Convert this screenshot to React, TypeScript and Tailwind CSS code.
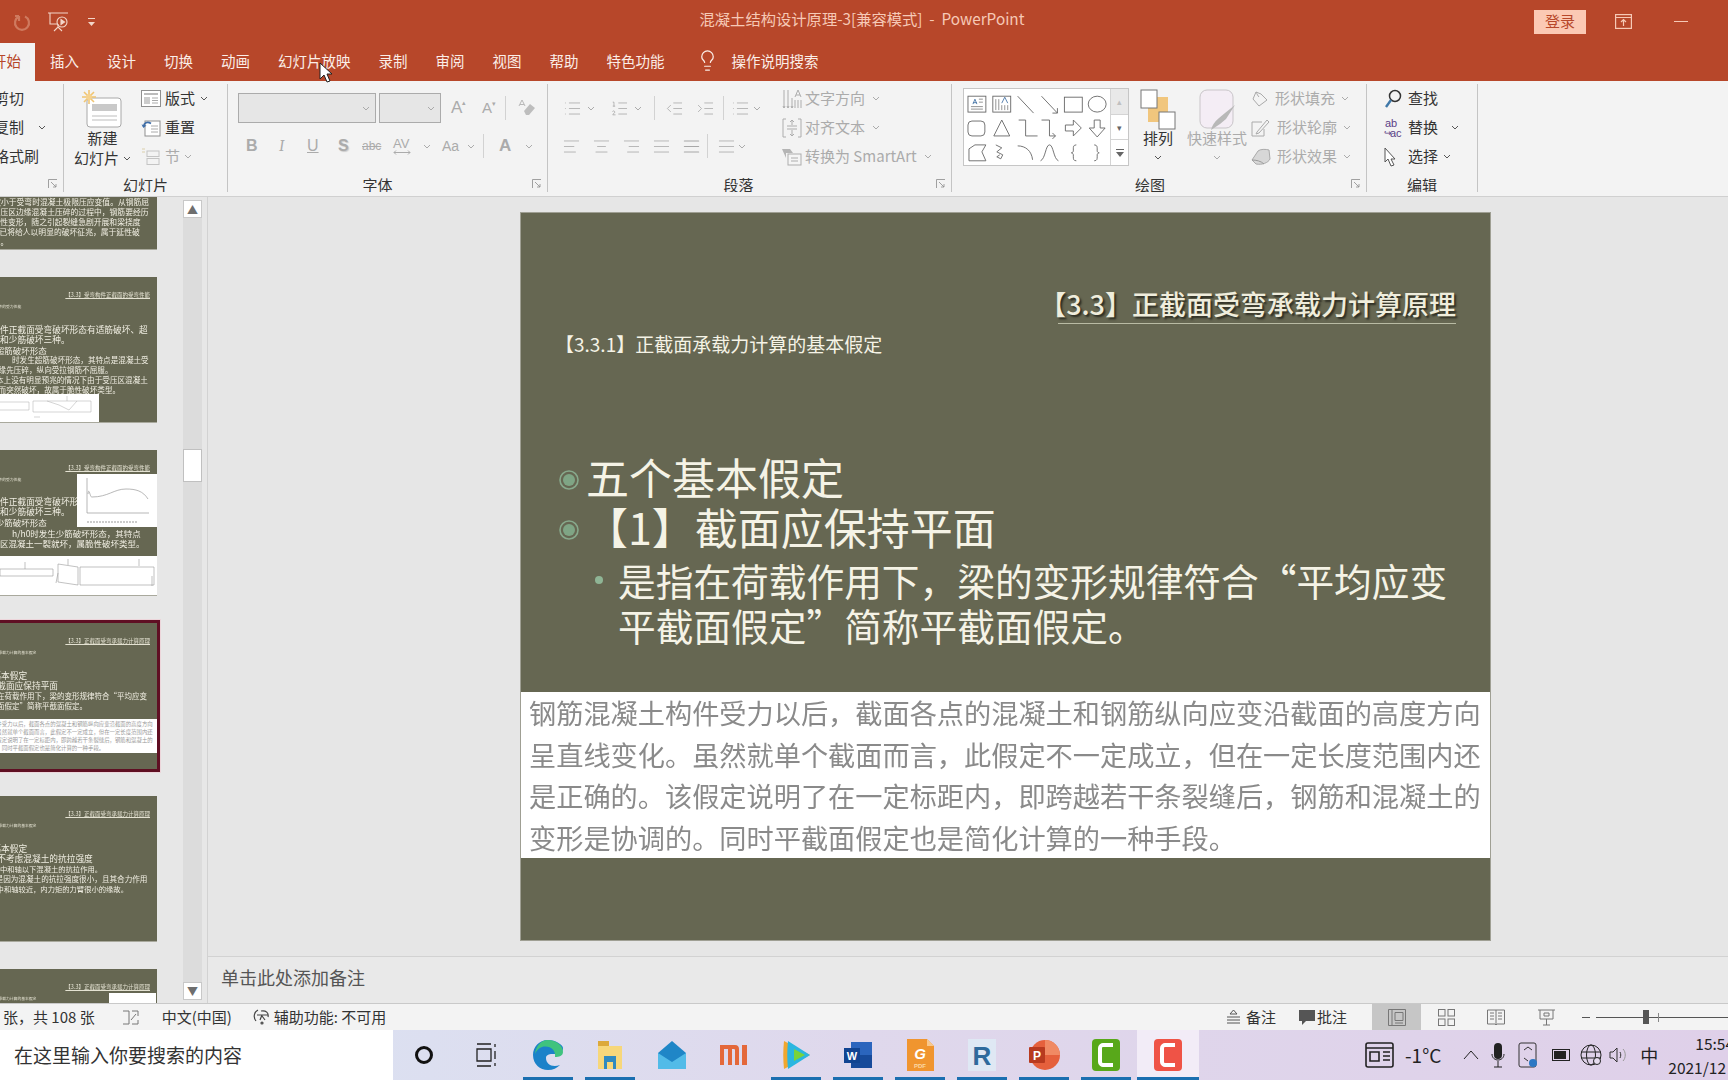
import { ReactNode } from "react";
import {
  AlignCenter,
  AlignJustify,
  AlignLeft,
  AlignRight,
  IndentDecrease,
  IndentIncrease,
  Lightbulb,
  List,
  ListOrdered,
} from "lucide-react";

const DIS = "text-[#ababab]";

function Chev({ className = "text-[#555]" }: { className?: string }) {
  return (
    <svg className={`shrink-0 ${className}`} width="8" height="5" viewBox="0 0 8 5" fill="none" stroke="currentColor" strokeWidth="1">
      <path d="M1 1l3 3 3-3" />
    </svg>
  );
}

function Launcher() {
  return (
    <svg className="absolute right-[5px] bottom-[3px]" width="10" height="10" viewBox="0 0 10 10" fill="none" stroke="#8a8a8a" strokeWidth="0.8">
      <path d="M.5 9V.5H9M3 3l5 5M8 5v3H5" />
    </svg>
  );
}

function Group({ w, label, labelPad = "", children }: { w: string; label: string; labelPad?: string; children: ReactNode }) {
  return (
    <div className={`${w} relative shrink-0 h-[108px] border-r border-[#c4c4c4] overflow-hidden flex flex-col`}>
      <div className="h-[87px] shrink-0 flex">{children}</div>
      <div className={`mt-[4px] text-center text-[15px] leading-[20px] text-[#333] ${labelPad}`}>{label}</div>
    </div>
  );
}

function Row({ className = "", children }: { className?: string; children: ReactNode }) {
  return <div className={`h-[29px] flex items-center ${className}`}>{children}</div>;
}

function MouseCursor() {
  return (
    <svg className="absolute left-[319px] top-[62px]" width="14" height="21" viewBox="0 0 14 21">
      <path d="M1 1v16l4-4 3 7 3-1-3-7h5z" fill="#fff" stroke="#222" strokeWidth="1" />
    </svg>
  );
}

function NewSlideIcon() {
  return (
    <svg width="44" height="40" viewBox="0 0 44 40" fill="none">
      <rect x="6" y="9" width="34" height="29" rx="3" fill="#fff" stroke="#a8a8a8" />
      <rect x="11" y="15" width="25" height="7" fill="#c9c9c9" />
      <path d="M11 27h25M11 31h25" stroke="#bdbdbd" />
      <path d="M8 1v14M1 8h14M3 3l10 10M13 3L3 13" stroke="#f0c572" strokeWidth="1.6" />
      <circle cx="8" cy="8" r="3" fill="#f5d28e" />
    </svg>
  );
}

function LayoutIcon() {
  return (
    <svg width="20" height="17" viewBox="0 0 20 17" fill="#fff" stroke="#8f8f8f">
      <rect x=".5" y=".5" width="19" height="16" />
      <path d="M3 4h14" stroke="#bbb" strokeWidth="2" />
      <rect x="3" y="7" width="6" height="7" fill="#ccc" stroke="none" />
      <path d="M11 8h6M11 10.5h6M11 13h6" stroke="#aaa" />
    </svg>
  );
}

function ResetIcon() {
  return (
    <svg width="20" height="18" viewBox="0 0 20 18" fill="none">
      <rect x="4" y="2" width="15" height="15" fill="#fff" stroke="#8f8f8f" />
      <path d="M10 7h7M10 10h7M10 13h7" stroke="#aaa" />
      <path d="M10 4.5C6 2 3 4 2.5 8" stroke="#3f6ea8" strokeWidth="1.8" />
      <path d="M.5 5.5l2 3.5 3-2.5z" fill="#3f6ea8" />
    </svg>
  );
}

function SectionIcon() {
  return (
    <svg width="20" height="18" viewBox="0 0 20 18" fill="none" stroke="#c4c4c4">
      <path d="M1 1h3M1 4h3" stroke="#e3dcc4" strokeWidth="1.5" />
      <rect x="6" y="3" width="12" height="5.5" />
      <rect x="6" y="10.5" width="12" height="6" />
    </svg>
  );
}

function FontGrowIcon({ up }: { up: boolean }) {
  return (
    <span className={`relative font-['Liberation_Sans',sans-serif] ${up ? "text-[17px]" : "text-[15px]"} ${DIS}`}>
      A
      <span className="absolute -right-[4px] top-[1px] text-[7px] leading-[7px]">{up ? "▴" : "▾"}</span>
    </span>
  );
}

function EraserIcon() {
  return (
    <svg width="20" height="20" viewBox="0 0 20 20" fill="none">
      <path d="M3 8l3-6 3 6M4 6.5h4" stroke="#b8b8b8" />
      <path d="M8 13l6-7 5 4-6 7h-3z" fill="#bdbdbd" />
    </svg>
  );
}

function TextDirIcon() {
  return (
    <svg width="20" height="22" viewBox="0 0 20 22" fill="none" stroke="#adadad">
      <path d="M2 2v18M6 2v18M10 10v10" />
      <path d="M1 18l1 2 1-2M5 18l1 2 1-2M9 18l1 2 1-2" />
      <path d="M13 9l3-7 3 7M14 7h4M13 12v8M16 12v8M19 12v8" />
    </svg>
  );
}

function AlignTextIcon() {
  return (
    <svg width="20" height="20" viewBox="0 0 20 20" fill="none" stroke="#adadad">
      <path d="M4 1H1v18h3M16 1h3v18h-3M5 8h10M5 11h10" />
      <path d="M10 7V2M8 4l2-2 2 2M10 12v6M8 16l2 2 2-2" />
    </svg>
  );
}

function SmartArtIcon() {
  return (
    <svg width="20" height="18" viewBox="0 0 20 18" fill="none">
      <path d="M0 1h8l3 4H4v5z" fill="#b5b5b5" />
      <rect x="6" y="6" width="13" height="11" fill="#f5f5f5" stroke="#adadad" />
      <path d="M9 10h7M9 13h7" stroke="#adadad" />
    </svg>
  );
}

function ShapeGallery() {
  return (
    <svg width="147" height="76" viewBox="0 0 147 76" fill="none" stroke="#666" strokeWidth="0.9">
      <rect x="4" y="7" width="18" height="16" />
      <path d="M11 10l-2 5M11 10l2 5M9 13.5h4" stroke="#4a76a8" />
      <path d="M7 17.5h12M7 20h12M15 10h4M15 13h4" stroke="#888" />
      <rect x="29" y="7" width="18" height="16" />
      <path d="M32 10v11M35 10v11M38 16v5M41 16v5M44 16v5" stroke="#888" />
      <path d="M38 14l3-6 3 6" stroke="#4a76a8" />
      <path d="M54 7l16 17" />
      <path d="M78 7l16 17M94 19v5h-5" />
      <rect x="101" y="8" width="18" height="15" />
      <ellipse cx="134" cy="15" rx="9" ry="8" />
      <rect x="4" y="32" width="17" height="15" rx="4" />
      <path d="M38 31l-8 16h16z" />
      <path d="M55 31h7v16h12" />
      <path d="M78 31h8v16h6M89 44l3 3-3 3" />
      <path d="M102 36h8v-5l8 8-8 8v-5h-8z" />
      <path d="M131 31h6v8h5l-8 9-8-9h5z" />
      <path d="M5 72V60l6-4h11l-4 7 4 9z" />
      <path d="M32 56l6 3-5 4 6 3-2 4-4-2 3-2" />
      <path d="M54 57c8 0 14 5 15 14" />
      <path d="M77 72c5-2 5-16 9-16s4 14 9 16" />
      <path d="M113 56c-3 0-3 2-3 4v2c0 1-1 2-2 2 1 0 2 1 2 2v2c0 2 0 4 3 4" />
      <path d="M131 56c3 0 3 2 3 4v2c0 1 1 2 2 2-1 0-2 1-2 2v2c0 2 0 4-3 4" />
    </svg>
  );
}

function ArrangeIcon() {
  return (
    <svg width="36" height="42" viewBox="0 0 36 42">
      <rect x="8" y="8" width="20" height="25" fill="#f1c67d" />
      <rect x="1" y="1" width="16" height="18" fill="#fff" stroke="#777" />
      <rect x="19" y="23" width="16" height="17" fill="#fff" stroke="#777" />
    </svg>
  );
}

function QuickStyleIcon() {
  return (
    <svg width="38" height="42" viewBox="0 0 38 42" fill="none">
      <rect x="2" y="1" width="33" height="38" rx="7" fill="#f4edf5" stroke="#c9c5c9" />
      <path d="M37 16l-9 14-6 5-9 6c1-4 3-8 8-12l6-5z" fill="#b8b8b8" />
    </svg>
  );
}

function FillIcon() {
  return (
    <svg width="18" height="18" viewBox="0 0 18 18" fill="none" stroke="#aaa">
      <path d="M5 2l-3 7 6 7 8-6-6-6z" />
      <path d="M5 2c1 2 2 4 3 5" />
    </svg>
  );
}

function OutlineIcon() {
  return (
    <svg width="20" height="18" viewBox="0 0 20 18" fill="none" stroke="#aaa">
      <path d="M11 3H1v14h12v-7" />
      <path d="M6 13l10-12 2 2L8 14l-3 1z" />
    </svg>
  );
}

function EffectIcon() {
  return (
    <svg width="20" height="18" viewBox="0 0 20 18">
      <path d="M1 12L7 3c2-2 8-2 11-1l1 9c-2 4-8 6-14 5z" fill="#d7d7d7" stroke="#aaa" />
      <path d="M1 12c4 0 9 1 12 4" fill="none" stroke="#999" />
    </svg>
  );
}

function FindIcon() {
  return (
    <svg width="18" height="20" viewBox="0 0 18 20" fill="none">
      <circle cx="11" cy="7" r="5.5" stroke="#333" strokeWidth="1.5" />
      <path d="M7 11l-5 7" stroke="#3f78a8" strokeWidth="2.4" />
    </svg>
  );
}

function ReplaceIcon() {
  return (
    <span className="relative w-[20px] h-[22px] font-['Liberation_Sans',sans-serif] text-[11px] leading-[10px] text-[#5b3f86] block">
      <span className="block pl-[1px] pt-[1px]">ab</span>
      <span className="block pl-[6px]">ac</span>
      <span className="absolute left-0 top-[11px] text-[9px] leading-[10px]">↪</span>
    </span>
  );
}

function SelectArrow() {
  return (
    <svg width="12" height="20" viewBox="0 0 12 20" fill="#fff" stroke="#555">
      <path d="M1 1v14l3-3 3 7 3-1-3-6h4z" />
    </svg>
  );
}

function Ribbon() {
  return (
    <div className="h-[116px] bg-[#f3f3f3] border-b border-[#d0d0d0] flex pt-[3px] text-[15px] text-[#333]">
      <Group w="w-[64px]" label="">
        <div className="-ml-[6px] flex flex-col whitespace-nowrap">
          <Row>剪切</Row>
          <Row className="gap-[14px]">
            复制
            <Chev />
          </Row>
          <Row>格式刷</Row>
        </div>
        <Launcher />
      </Group>
      <Group w="w-[164px]" label="幻灯片">
        <div className="w-[77px] flex flex-col items-center">
          <div className="pt-[5px]">
            <NewSlideIcon />
          </div>
          <div className="leading-[20px] text-center -mt-[1px]">新建</div>
          <div className="leading-[20px] flex items-center gap-[4px] whitespace-nowrap">
            幻灯片
            <Chev />
          </div>
        </div>
        <div className="flex flex-col">
          <Row className="gap-[4px]">
            <LayoutIcon />
            版式
            <span className="ml-[1px]">
              <Chev />
            </span>
          </Row>
          <Row className="gap-[4px]">
            <ResetIcon />
            重置
          </Row>
          <Row className={`gap-[4px] ${DIS}`}>
            <SectionIcon />
            节
            <Chev className={DIS} />
          </Row>
        </div>
      </Group>
      <Group w="w-[320px]" label="字体" labelPad="pr-[20px]">
        <div className="pl-[10px] flex flex-col">
          <div className="h-[44px] pt-[9px] flex gap-[3px]">
            <div className="w-[138px] h-[30px] bg-[#e6e6e6] border border-[#ababab] flex items-center justify-end pr-[5px]">
              <Chev className="text-[#aaa]" />
            </div>
            <div className="w-[62px] h-[30px] bg-[#e6e6e6] border border-[#ababab] flex items-center justify-end pr-[5px]">
              <Chev className="text-[#aaa]" />
            </div>
            <div className="flex items-center h-[30px]">
              <div className="w-[30px] pl-[7px]">
                <FontGrowIcon up />
              </div>
              <div className="w-[28px] pl-[8px]">
                <FontGrowIcon up={false} />
              </div>
              <div className="w-px h-[24px] bg-[#d2d2d2] ml-[3px]" />
              <div className="pl-[10px]">
                <EraserIcon />
              </div>
            </div>
          </div>
          <div className={`flex items-center h-[30px] mt-[3px] pl-[8px] font-['Liberation_Sans',sans-serif] ${DIS}`}>
            <span className="w-[33px] font-bold text-[16px]">B</span>
            <span className="w-[28px] italic font-serif text-[16px]">I</span>
            <span className="w-[31px] underline text-[16px]">U</span>
            <span className="w-[24px] font-bold text-[16px] [text-shadow:1px_1px_1px_#ccc]">S</span>
            <span className="w-[31px] text-[12px] line-through">abc</span>
            <span className="w-[30px] flex flex-col items-start text-[13px] leading-[13px]">
              AV
              <svg width="18" height="5" viewBox="0 0 18 5" fill="none" stroke="#ababab">
                <path d="M1 2.5h16M3 .5l-2 2 2 2M15 .5l2 2-2 2" />
              </svg>
            </span>
            <span className="w-[19px]">
              <Chev className={DIS} />
            </span>
            <span className="w-[25px] text-[14px]">Aa</span>
            <span className="w-[16px]">
              <Chev className={DIS} />
            </span>
            <div className="w-px h-[24px] bg-[#d2d2d2] mr-[15px]" />
            <span className="w-[26px] text-[17px] font-bold">A</span>
            <Chev className={DIS} />
          </div>
        </div>
        <Launcher />
      </Group>
      <Group w="w-[404px]" label="段落" labelPad="pr-[22px]">
        <div className="pl-[15px] w-[226px] flex flex-col text-[#a8a8a8]">
          <div className="h-[44px] pt-[4px] flex items-center">
            <List size={19} strokeWidth={1} />
            <span className="ml-[5px] w-[23px]">
              <Chev className={DIS} />
            </span>
            <ListOrdered size={19} strokeWidth={1} />
            <span className="ml-[5px] w-[20px]">
              <Chev className={DIS} />
            </span>
            <div className="w-px h-[24px] bg-[#d2d2d2] mr-[10px]" />
            <IndentDecrease size={19} strokeWidth={1} className="mr-[12px]" />
            <IndentIncrease size={19} strokeWidth={1} className="mr-[8px]" />
            <div className="w-px h-[24px] bg-[#d2d2d2] mr-[7px]" />
            <List size={19} strokeWidth={1} />
            <span className="ml-[3px]">
              <Chev className={DIS} />
            </span>
          </div>
          <div className="h-[30px] mt-[3px] flex items-center gap-[11px] -ml-[1px]">
            <AlignLeft size={19} strokeWidth={1} />
            <AlignCenter size={19} strokeWidth={1} />
            <AlignRight size={19} strokeWidth={1} />
            <AlignJustify size={19} strokeWidth={1} />
            <AlignJustify size={19} strokeWidth={1.4} />
            <div className="w-px h-[24px] bg-[#d2d2d2] -ml-[5px]" />
            <AlignJustify size={19} strokeWidth={1} className="-ml-[2px]" />
            <span className="-ml-[9px]">
              <Chev className={DIS} />
            </span>
          </div>
        </div>
        <div className={`flex flex-col pl-[8px] ${DIS}`}>
          <Row className="gap-[3px]">
            <TextDirIcon />
            文字方向
            <span className="ml-[4px]">
              <Chev className={DIS} />
            </span>
          </Row>
          <Row className="gap-[3px]">
            <AlignTextIcon />
            对齐文本
            <span className="ml-[4px]">
              <Chev className={DIS} />
            </span>
          </Row>
          <Row className="gap-[3px] whitespace-nowrap">
            <SmartArtIcon />
            转换为 SmartArt
            <span className="ml-[4px]">
              <Chev className={DIS} />
            </span>
          </Row>
        </div>
        <Launcher />
      </Group>
      <Group w="w-[415px]" label="绘图" labelPad="pr-[18px]">
        <div className="ml-[11px] mt-[4px] w-[166px] h-[78px] bg-white border border-[#c6c6c6] flex shrink-0">
          <ShapeGallery />
          <div className="w-[18px] flex flex-col text-[9px] leading-none text-[#666] border-l border-[#d4d4d4]">
            <div className="flex-1 bg-[#e9e9e9] flex items-center justify-center text-[#c0c0c0]">▴</div>
            <div className="flex-1 border-y border-[#d4d4d4] flex items-center justify-center">▾</div>
            <div className="flex-1 flex items-center justify-center">
              <svg width="8" height="8" viewBox="0 0 8 8" fill="#666">
                <path d="M0 0h8v1H0zM0 3h8L4 8z" />
              </svg>
            </div>
          </div>
        </div>
        <div className="w-[54px] ml-[2px] pt-[5px] flex flex-col items-center shrink-0">
          <ArrangeIcon />
          <div className="leading-[20px] -mt-[3px]">排列</div>
          <div className="mt-[7px]">
            <Chev />
          </div>
        </div>
        <div className={`w-[64px] pt-[5px] flex flex-col items-center shrink-0 ${DIS}`}>
          <QuickStyleIcon />
          <div className="leading-[20px] -mt-[3px] whitespace-nowrap">快速样式</div>
          <div className="mt-[7px]">
            <Chev className={DIS} />
          </div>
        </div>
        <div className={`flex flex-col pl-[2px] ${DIS}`}>
          <Row className="gap-[6px]">
            <FillIcon />
            形状填充
            <Chev className={DIS} />
          </Row>
          <Row className="gap-[6px]">
            <OutlineIcon />
            形状轮廓
            <Chev className={DIS} />
          </Row>
          <Row className="gap-[6px]">
            <EffectIcon />
            形状效果
            <Chev className={DIS} />
          </Row>
        </div>
        <Launcher />
      </Group>
      <Group w="w-[111px]" label="编辑">
        <div className="pl-[17px] flex flex-col">
          <Row className="gap-[6px]">
            <FindIcon />
            查找
          </Row>
          <Row className="gap-[4px]">
            <ReplaceIcon />
            替换
            <span className="ml-[9px]">
              <Chev />
            </span>
          </Row>
          <Row className="gap-[12px]">
            <SelectArrow />
            <span>选择</span>
            <span className="-ml-[7px]">
              <Chev />
            </span>
          </Row>
        </div>
      </Group>
    </div>
  );
}

function TitleBar() {
  return (
    <div className="h-[43px] bg-[#b7472a] relative flex items-center text-[#f6c9b6]">
      <svg className="ml-[13px]" width="18" height="18" viewBox="0 0 18 18" fill="none" stroke="#cf7a5f" strokeWidth="2.2">
        <path d="M6 3.5a7 7 0 1 0 6 0M6 3v5M6 3H2" />
      </svg>
      <svg className="ml-[16px]" width="22" height="22" viewBox="0 0 22 22" fill="none" stroke="#f3d6c9" strokeWidth="1.1">
        <path d="M1 2h20M3 2v11h8M11 13v3M7 20l4-4 4 4" />
        <circle cx="15" cy="11" r="5" />
        <path d="M14 8.5v5l3.5-2.5z" fill="#f3d6c9" />
      </svg>
      <svg className="ml-[19px]" width="7" height="10" viewBox="0 0 7 10" fill="#f3d6c9">
        <path d="M0 1h7v1H0zM0 5h7L3.5 9z" />
      </svg>
      <div className="absolute left-0 right-0 top-[8px] flex justify-center text-[15.3px] leading-[20px] whitespace-pre pr-[4px]">
        混凝土结构设计原理-3[兼容模式]  -  PowerPoint
      </div>
      <div className="ml-auto flex items-center">
        <div className="w-[52px] h-[24px] bg-[#fbc9b4] text-[#b7472a] text-[15px] flex items-center justify-center">登录</div>
        <svg className="ml-[29px]" width="17" height="15" viewBox="0 0 17 15" fill="none" stroke="#f6c9b6" strokeWidth="1.2">
          <rect x=".6" y=".6" width="15.8" height="13.8" />
          <path d="M1 3.5h15M8.5 12V6M6 8l2.5-2.5L11 8" />
        </svg>
        <div className="w-[14px] h-[1.5px] bg-[#f6c9b6] ml-[42px] mr-[40px]" />
      </div>
    </div>
  );
}

const TABS = ["插入", "设计", "切换", "动画", "幻灯片放映", "录制", "审阅", "视图", "帮助", "特色功能"];

function TabBar() {
  return (
    <div className="h-[38px] bg-[#b7472a] flex items-center text-[14.5px] text-[#fbeee8] relative whitespace-nowrap">
      <div className="w-[35px] h-full bg-[#f3f3f3] text-[#b7472a] flex items-center justify-end pr-[14px] pb-[3px] shrink-0">开始</div>
      <div className="ml-[15px] -mt-[3px] flex gap-[28px]">
        {TABS.map((t) => (
          <span key={t}>{t}</span>
        ))}
      </div>
      <Lightbulb className="ml-[31px] -mt-[3px]" size={23} strokeWidth={1.3} />
      <span className="ml-[13px] -mt-[3px]">操作说明搜索</span>
    </div>
  );
}

function Line({ pl, size, children }: { pl: string; size: string; children: ReactNode }) {
  return <div className={`${pl} ${size} leading-[10px] whitespace-nowrap text-[#f0eee2]`}>{children}</div>;
}

function Thumb({ title, sub, selected, children }: { title: string; sub: string; selected?: boolean; children: ReactNode }) {
  return (
    <div
      className={`w-[195px] h-[146px] shrink-0 bg-[#666752] relative overflow-hidden blur-[0.3px] ${
        selected ? "outline-[3px] outline-[#5f0f23] shadow-[0_0_0_4px_#ecd5da]" : "border-b border-[#a9a99d]"
      }`}
    >
      <div className="h-[20px] pt-[15px] pr-[7px] text-right text-[5.5px] leading-[6px] text-[#e4e2d2] underline whitespace-nowrap">{title}</div>
      <div className="pl-[9px] mt-[-1px] pt-[8px] text-[3.8px] leading-[6px] text-[#e4e2d2] whitespace-nowrap">{sub}</div>
      {children}
    </div>
  );
}

function ThumbPane() {
  return (
    <div className="w-[208px] shrink-0 flex bg-[#e7e7e7] border-r border-[#d2d2d2]">
      <div className="w-[165px] pr-[8px] flex flex-col items-end gap-[27px] overflow-hidden">
        <div className="w-[195px] h-[146px] shrink-0 -mt-[93px] bg-[#666752] border-b border-[#a9a99d] relative overflow-hidden flex flex-col justify-end pb-[2px] blur-[0.3px]">
          <Line pl="pl-0" size="text-[7.8px]">受压区高度小于受弯时混凝土极限压应变值。从钢筋屈</Line>
          <Line pl="pl-[15px]" size="text-[7.8px]">服至受压区边缘混凝土压碎的过程中，钢筋要经历</Line>
          <Line pl="pl-[7px]" size="text-[7.8px]">较大的塑性变形，随之引起裂缝急剧开展和梁挠度</Line>
          <Line pl="pl-[14px]" size="text-[7.8px]">激增，已将给人以明显的破坏征兆，属于延性破</Line>
          <Line pl="pl-[15px]" size="text-[7.8px]">坏类型。</Line>
        </div>
        <Thumb title="【3.3】受弯构件正截面的受弯性能" sub="【3.3.1】受弯构件的受力性能">
          <div className="pt-[15px]">
            <Line pl="pl-[12px]" size="text-[8.7px]">受弯构件正截面受弯破坏形态有适筋破坏、超</Line>
            <Line pl="pl-[12px]" size="text-[8.7px]">筋破坏和少筋破坏三种。</Line>
            <Line pl="pl-[12px]" size="text-[8.5px]">（2）超筋破坏形态</Line>
            <Line pl="pl-[50px]" size="text-[7.6px]">时发生超筋破坏形态，其特点是混凝土受</Line>
            <Line pl="pl-[29px]" size="text-[7.6px]">边缘先压碎，纵向受拉钢筋不屈服。</Line>
            <Line pl="pl-[34px]" size="text-[7.6px]">本上没有明显预兆的情况下由于受压区混凝土</Line>
            <Line pl="pl-[29px]" size="text-[7.6px]">碎而突然破坏，故属于脆性破坏类型。</Line>
          </div>
          <svg className="absolute left-0 bottom-0" width="137" height="28" viewBox="0 0 137 28" fill="none" stroke="#aaa" strokeWidth="0.5">
            <rect width="137" height="28" fill="#fff" stroke="none" />
            <path d="M0 8h67v8H0zM71 7h58v11H71zM85 7l12 4 10 5 8-9M105 2v5M72 23h6" />
          </svg>
        </Thumb>
        <Thumb title="【3.3】受弯构件正截面的受弯性能" sub="【3.3.1】受弯构件的受力性能">
          <div className="pt-[14px]">
            <Line pl="pl-[12px]" size="text-[8.7px]">受弯构件正截面受弯破坏形</Line>
            <Line pl="pl-[12px]" size="text-[8.7px]">筋破坏和少筋破坏三种。</Line>
            <Line pl="pl-[12px]" size="text-[8.5px]">（3）少筋破坏形态</Line>
            <div className="pl-[50px] mt-[1px] text-[8.5px] leading-[10px] text-[#f0eee2] whitespace-nowrap">h/h0时发生少筋破坏形态，其特点</div>
            <div className="pl-[21px] text-[8.5px] leading-[10px] text-[#f0eee2] whitespace-nowrap">受拉区混凝土一裂就坏，属脆性破坏类型。</div>
          </div>
          <div className="absolute right-0 top-[24px] w-[80px] h-[53px] bg-white">
            <svg width="80" height="53" viewBox="0 0 80 53" fill="none" stroke="#999" strokeWidth="0.7">
              <path d="M10 4v35h62M11 20c1-8 2 4 4 3 16 0 22-8 34-8 10 0 17 2 22 10" />
              <path d="M10 48h50" strokeDasharray="2 1" stroke="#ccc" strokeWidth="2" />
            </svg>
          </div>
          <div className="absolute left-0 right-0 bottom-0 h-[39px] bg-white">
            <svg width="195" height="39" viewBox="0 0 195 39" fill="none" stroke="#999" strokeWidth="0.6">
              <path d="M38 13h53v7H38zM96 8l20 3v18l-20-3zM118 11h74v18h-74zM63 6v7M106 3v6M177 3v7M96 17l-2 10M190 20v10" />
            </svg>
          </div>
        </Thumb>
        <Thumb title="【3.3】正截面受弯承载力计算原理" sub="【3.3.1】正截面承载力计算的基本假定" selected>
          <div className="pt-[15px]">
            <Line pl="pl-[13px]" size="text-[8.7px]">五个基本假定</Line>
            <Line pl="pl-[13px]" size="text-[8.7px]">【1】截面应保持平面</Line>
            <Line pl="pl-[20px]" size="text-[7.5px]">是指在荷载作用下，梁的变形规律符合“平均应变</Line>
            <Line pl="pl-[20px]" size="text-[7.5px]">平截面假定”简称平截面假定。</Line>
          </div>
          <div className="absolute left-0 right-0 top-[96px] h-[34px] bg-white text-[5.4px] leading-[8px] text-[#999] pl-[2px] pt-[1px] whitespace-nowrap">
            <div>钢筋混凝土构件受力以后，截面各点的混凝土和钢筋纵向应变沿截面的高度方向</div>
            <div>呈直线变化。虽然就单个截面而言，此假定不一定成立，但在一定长度范围内还</div>
            <div>是正确的。该假定说明了在一定标距内，即跨越若干条裂缝后，钢筋和混凝土的</div>
            <div>变形是协调的。同时平截面假定也是简化计算的一种手段。</div>
          </div>
        </Thumb>
        <Thumb title="【3.3】正截面受弯承载力计算原理" sub="【3.3.1】正截面承载力计算的基本假定">
          <div className="pt-[15px]">
            <Line pl="pl-[13px]" size="text-[8.7px]">五个基本假定</Line>
            <Line pl="pl-[13px]" size="text-[8.7px]">【2】不考虑混凝土的抗拉强度</Line>
            <Line pl="pl-[16px]" size="text-[7.3px]">不考虑中和轴以下混凝土的抗拉作用。</Line>
            <Line pl="pl-[26px]" size="text-[7.6px]">这是因为混凝土的抗拉强度很小，且其合力作用</Line>
            <Line pl="pl-[20px]" size="text-[7.3px]">点离中和轴较近，内力矩的力臂很小的缘故。</Line>
          </div>
        </Thumb>
        <Thumb title="【3.3】正截面受弯承载力计算原理" sub="【3.3.1】正截面承载力计算的基本假定">
          <div className="absolute right-[1px] top-[24px] w-[47px] h-[40px] bg-white" />
        </Thumb>
      </div>
      <div className="ml-[18px] mt-[3px] mb-[3px] w-[19px] bg-[#dcdcdc] flex flex-col text-[#6e6e6e] text-[11px] leading-none">
        <div className="h-[18px] bg-white border border-[#c8c8c8] flex items-center justify-center">▲</div>
        <div className="mt-[231px] h-[33px] bg-white border border-[#c0c0c0]" />
        <div className="mt-auto h-[18px] bg-white border border-[#c8c8c8] flex items-center justify-center">▼</div>
      </div>
    </div>
  );
}

function Bullet() {
  return (
    <svg className="shrink-0 mt-[8px]" width="20" height="20" viewBox="0 0 20 20" fill="none">
      <circle cx="10" cy="10" r="9" stroke="#87a98c" strokeWidth="1.6" />
      <circle cx="10" cy="10" r="6" fill="#7fa585" />
    </svg>
  );
}

function Slide() {
  return (
    <div className="w-[971px] h-[729px] bg-[#666752] border border-[#9f9f93] flex flex-col text-[#f5f3e6] shrink-0">
      <div className="pt-[72px] pr-[34px] flex flex-col items-end">
        <div className="text-[27px] leading-[38px] font-medium text-[#efeddc] whitespace-nowrap [text-shadow:2px_2px_2px_#2c2c22]">
          【3.3】正截面受弯承载力计算原理
        </div>
        <div className="w-[398px] h-px bg-[#b9bba4]" />
      </div>
      <div className="pl-[34px] mt-[6px] text-[19px] leading-[28px] whitespace-nowrap">【3.3.1】正截面承载力计算的基本假定</div>
      <div className="pl-[38px] mt-[92px] flex items-center gap-[7px] text-[43px] leading-[52px]">
        <Bullet />
        <span>五个基本假定</span>
      </div>
      <div className="pl-[38px] -mt-[2px] flex items-center gap-[6px] text-[43px] leading-[52px]">
        <Bullet />
        <span className="whitespace-nowrap">【1】截面应保持平面</span>
      </div>
      <div className="pl-[74px] mt-[5px] flex items-start gap-[15px] text-[37.7px] leading-[45px]">
        <span className="w-[8px] h-[8px] rounded-full bg-[#8fb595] mt-[19px] shrink-0" />
        <div className="whitespace-nowrap">
          <div>是指在荷载作用下，梁的变形规律符合“平均应变</div>
          <div>平截面假定”简称平截面假定。</div>
        </div>
      </div>
      <div className="mt-[45px] h-[166px] bg-white text-[#8a8a8a] text-[27.2px] leading-[41.5px] pl-[8px] whitespace-nowrap blur-[0.4px]">
        <div>钢筋混凝土构件受力以后，截面各点的混凝土和钢筋纵向应变沿截面的高度方向</div>
        <div>呈直线变化。虽然就单个截面而言，此假定不一定成立，但在一定长度范围内还</div>
        <div>是正确的。该假定说明了在一定标距内，即跨越若干条裂缝后，钢筋和混凝土的</div>
        <div>变形是协调的。同时平截面假定也是简化计算的一种手段。</div>
      </div>
    </div>
  );
}

function StatusBar() {
  return (
    <div className="h-[27px] bg-[#f3f3f3] border-t border-[#c9c9c9] flex items-center text-[15px] text-[#333] whitespace-nowrap">
      <span className="ml-[3px]">张，共 108 张</span>
      <svg className="ml-[27px]" width="17" height="15" viewBox="0 0 17 15" fill="none" stroke="#777">
        <path d="M1 1h6v13H1M10 1h6v5M10 14h6V10M9 10l5-6" />
      </svg>
      <span className="ml-[23px]">中文(中国)</span>
      <svg className="ml-[20px]" width="18" height="18" viewBox="0 0 18 18" fill="none" stroke="#444" strokeWidth="1.2">
        <path d="M6 2C2 4 1 9 4 13M9 3c5-1 8 2 7 6M5 7h11M10 7l-2 5M10 8l3 4" />
        <circle cx="10" cy="15" r="1" />
      </svg>
      <span className="ml-[4px]">辅助功能: 不可用</span>
      <svg className="ml-auto" width="13" height="16" viewBox="0 0 13 16" fill="none" stroke="#555">
        <path d="M6.5 1L3 5h7zM0 8h13M0 11h13M0 14h13" />
      </svg>
      <span className="ml-[6px]">备注</span>
      <svg className="ml-[22px]" width="18" height="18" viewBox="0 0 18 18" fill="#555">
        <path d="M1 2h16v11H8l-4 4v-4H1z" />
      </svg>
      <span className="ml-[1px]">批注</span>
      <div className="ml-[25px] w-[49px] h-full bg-[#c6c6c6] flex items-center justify-center">
        <svg width="18" height="17" viewBox="0 0 18 17" fill="none" stroke="#777">
          <path d="M.5.5h17v16H.5zM4 .5v16M7 3.5h8v8H7zM7 14h8" />
        </svg>
      </div>
      <div className="w-[50px] flex justify-center">
        <svg width="17" height="17" viewBox="0 0 17 17" fill="none" stroke="#777">
          <rect x=".5" y=".5" width="6.5" height="6.5" />
          <rect x="10" y=".5" width="6.5" height="6.5" />
          <rect x=".5" y="10" width="6.5" height="6.5" />
          <rect x="10" y="10" width="6.5" height="6.5" />
        </svg>
      </div>
      <div className="w-[50px] flex justify-center">
        <svg width="18" height="17" viewBox="0 0 18 17" fill="none" stroke="#777">
          <path d="M.5 1h17v14H10l-1 1-1-1H.5zM9 1v14M3 4h4M3 7h4M3 10h4M11 4h4M11 7h4M11 10h4" />
        </svg>
      </div>
      <div className="w-[50px] flex justify-center">
        <svg width="17" height="17" viewBox="0 0 17 17" fill="none" stroke="#777">
          <path d="M0 1h17M2 1v9h13V1M8.5 10v6M5 16h7M6 4h5v3H6z" />
        </svg>
      </div>
      <div className="ml-[11px] w-[8px] h-px bg-[#555]" />
      <div className="ml-[6px] w-[132px] h-px bg-[#555] relative">
        <div className="absolute left-[47px] -top-[7px] w-[6px] h-[14px] bg-[#555]" />
        <div className="absolute left-[62px] -top-[4px] w-px h-[9px] bg-[#888]" />
      </div>
    </div>
  );
}

function Edge() {
  return (
    <svg width="32" height="32" viewBox="0 0 32 32">
      <path d="M16 1C7 1 1 8 1 16c0 9 7 15 15 15 5 0 9-2 12-5-8 3-14-1-14-7 0-3 3-4 6-4 7 0 11-1 11-6C31 6 24 1 16 1z" fill="#1b82c9" />
      <path d="M16 1c8 0 15 5 15 12 0 4-4 5-8 5 1-7-5-12-13-10-3 1-6 4-7 7C4 7 9 1 16 1z" fill="#3fc37e" />
    </svg>
  );
}

function Folder() {
  return (
    <svg width="28" height="30" viewBox="0 0 28 30">
      <path d="M2 1h11v5H2z" fill="#dca93b" />
      <path d="M2 6h24v23H2z" fill="#f7d77a" />
      <path d="M8 16h12v13h-3v-7h-6v7H8z" fill="#2f8ac0" />
    </svg>
  );
}

function Mail() {
  return (
    <svg width="30" height="32" viewBox="0 0 30 32">
      <path d="M15 2l14 12v16H1V14z" fill="#1f86c7" />
      <path d="M1 14l14 9 14-9v16H1z" fill="#52bbe8" />
    </svg>
  );
}

function Mi() {
  return (
    <svg width="30" height="24" viewBox="0 0 30 24" fill="#e4683a">
      <path d="M1 2h15c3 0 4 2 4 4v16h-4V7c0-1-1-1-1-1h-2v16H9V6H5v16H1zM23 2h5v20h-5z" />
    </svg>
  );
}

function Play() {
  return (
    <svg width="30" height="32" viewBox="0 0 30 32">
      <path d="M3 2c-1 9-1 19 0 28l26-14z" fill="#f0a72e" />
      <path d="M7 2c-1 9-1 19 0 28l22-14z" fill="#2bb6e0" />
      <path d="M13 10v12l11-6z" fill="#7ad33b" />
    </svg>
  );
}

function Word() {
  return (
    <svg width="30" height="30" viewBox="0 0 30 30">
      <rect x="8" y="2" width="21" height="26" fill="#2b65bd" />
      <rect x="8" y="15" width="21" height="13" fill="#174a9a" />
      <rect x="1" y="8" width="16" height="15" fill="#114491" />
      <text x="9" y="20" textAnchor="middle" fontSize="11" fontWeight="700" fill="#fff" fontFamily="Liberation Sans">W</text>
    </svg>
  );
}

function PdfIcon() {
  return (
    <svg width="30" height="34" viewBox="0 0 30 34">
      <path d="M2 1h20l7 7v25H2z" fill="#f0952f" />
      <path d="M22 1v7h7z" fill="#f8c88d" />
      <text x="15" y="21" textAnchor="middle" fontSize="15" fontWeight="700" fontStyle="italic" fill="#fff" fontFamily="Liberation Sans">G</text>
      <text x="15" y="30" textAnchor="middle" fontSize="6" fontWeight="700" fill="#fbd9a5" fontFamily="Liberation Sans">PDF</text>
    </svg>
  );
}

function Revit() {
  return (
    <svg width="30" height="34" viewBox="0 0 30 34">
      <rect x="1" y="1" width="28" height="32" fill="#dfe8f4" />
      <text x="15" y="27" textAnchor="middle" fontSize="26" fontWeight="700" fill="#2f6a9c" fontFamily="Liberation Sans">R</text>
    </svg>
  );
}

function Ppt() {
  return (
    <svg width="32" height="32" viewBox="0 0 32 32">
      <circle cx="17" cy="16" r="15" fill="#e5603c" />
      <path d="M17 1a15 15 0 0 1 15 15H17z" fill="#f08a64" />
      <rect x="1" y="8" width="16" height="16" rx="1" fill="#b83a1f" />
      <text x="9" y="20.5" textAnchor="middle" fontSize="12" fontWeight="700" fill="#fff" fontFamily="Liberation Sans">P</text>
    </svg>
  );
}

function Camtasia({ fill }: { fill: string }) {
  return (
    <svg width="30" height="34" viewBox="0 0 30 34">
      <rect x="1" y="1" width="28" height="32" rx="4" fill={fill} />
      <path d="M22 7H12c-1 0-3 1-3 3v14c0 2 2 3 3 3h10" fill="none" stroke="#fff" strokeWidth="4" />
    </svg>
  );
}

const APPS: { icon: ReactNode; on: boolean }[] = [
  { icon: <Edge />, on: true },
  { icon: <Folder />, on: true },
  { icon: <Mail />, on: false },
  { icon: <Mi />, on: false },
  { icon: <Play />, on: true },
  { icon: <Word />, on: true },
  { icon: <PdfIcon />, on: true },
  { icon: <Revit />, on: true },
  { icon: <Ppt />, on: true },
  { icon: <Camtasia fill="#58a81a" />, on: true },
];

function Taskbar() {
  return (
    <div className="h-[50px] flex bg-gradient-to-r from-[#d9e6f4] via-[#dfd8ec] to-[#dfd0e9] whitespace-nowrap">
      <div className="w-[393px] shrink-0 bg-white flex items-center pl-[14px] text-[19px] text-[#333]">在这里输入你要搜索的内容</div>
      <div className="w-[62px] shrink-0 flex items-center justify-center">
        <div className="w-[18px] h-[18px] rounded-full border-[3px] border-[#111]" />
      </div>
      <div className="w-[62px] shrink-0 flex items-center justify-center">
        <svg width="21" height="24" viewBox="0 0 21 24" fill="none" stroke="#222" strokeWidth="1.3">
          <path d="M1 1h14M1 23h14M1 6h14v12H1zM19 1v3M19 8v8M19 20v3" />
        </svg>
      </div>
      {APPS.map((a, i) => (
        <div key={i} className="w-[62px] shrink-0 relative flex items-center justify-center">
          {a.icon}
          {a.on && <div className="absolute left-[6px] right-[6px] bottom-0 h-[3px] bg-[#1a6fb0]" />}
        </div>
      ))}
      <div className="w-[62px] shrink-0 bg-[#f2ecf7] relative flex items-center justify-center">
        <Camtasia fill="#ef5346" />
        <div className="absolute left-0 right-0 bottom-0 h-[3px] bg-[#1a6fb0]" />
      </div>
      <div className="ml-[166px] shrink-0 flex items-center text-[#222]">
        <svg width="30" height="26" viewBox="0 0 30 26" fill="none" stroke="#222" strokeWidth="1.6">
          <rect x="1" y="1" width="27" height="24" rx="2" />
          <path d="M1 6h27M5 10h9v9H5zM18 10h7M18 14h7M18 18h7" />
        </svg>
        <span className="ml-[10px] text-[19px]">-1°C</span>
        <svg className="ml-[22px]" width="16" height="10" viewBox="0 0 16 10" fill="none" stroke="#222">
          <path d="M1 9l7-8 7 8" />
        </svg>
        <svg className="ml-[12px]" width="14" height="26" viewBox="0 0 14 26">
          <rect x="3" y="1" width="8" height="16" rx="4" fill="#222" />
          <path d="M1 12c0 8 12 8 12 0M7 19v6M3 25h8" fill="none" stroke="#222" />
        </svg>
        <svg className="ml-[13px]" width="20" height="26" viewBox="0 0 20 26" fill="none" stroke="#333">
          <rect x="1" y="1" width="17" height="24" rx="2" />
          <path d="M6 8l4-3 4 3M6 16l4 3" />
          <circle cx="15" cy="21" r="4" fill="#2c78c4" stroke="none" />
        </svg>
        <svg className="ml-[14px]" width="18" height="12" viewBox="0 0 18 12">
          <rect x=".5" y=".5" width="17" height="11" fill="none" stroke="#222" />
          <rect x="2" y="2" width="12" height="8" fill="#222" />
        </svg>
        <svg className="ml-[10px]" width="22" height="22" viewBox="0 0 22 22" fill="none" stroke="#222">
          <circle cx="11" cy="11" r="10" />
          <ellipse cx="11" cy="11" rx="4.5" ry="10" />
          <path d="M1 8h20M1 14h20" />
          <circle cx="17" cy="17" r="3.5" fill="#e6dcef" />
        </svg>
        <svg className="ml-[7px]" width="20" height="18" viewBox="0 0 20 18" fill="none" stroke="#333">
          <path d="M1 6h3l4-4v14l-4-4H1zM11 6c1 2 1 4 0 6" />
          <path d="M14 3c3 3 3 9 0 12" stroke="#999" />
        </svg>
        <span className="ml-[11px] text-[18px]">中</span>
        <div className="ml-[10px] w-[60px] flex flex-col text-[15.5px] leading-[24px]">
          <span className="pl-[27px]">15:54</span>
          <span>2021/12</span>
        </div>
      </div>
    </div>
  );
}

export default function App() {
  return (
    <div className="w-[1728px] h-[1080px] overflow-hidden flex flex-col relative font-['Noto_Sans_CJK_SC','Noto_Sans',sans-serif] bg-[#e6e6e6]">
      <TitleBar />
      <TabBar />
      <Ribbon />
      <div className="h-[806px] flex">
        <ThumbPane />
        <div className="flex-1 flex flex-col">
          <div className="h-[759px] pt-[15px] pl-[312px] bg-[#e6e6e6]">
            <Slide />
          </div>
          <div className="flex-1 border-t border-[#d2d2d2] flex items-center pl-[13px] pb-[6px] text-[18px] text-[#555] bg-[#e9e9e9]">单击此处添加备注</div>
        </div>
      </div>
      <StatusBar />
      <Taskbar />
      <MouseCursor />
    </div>
  );
}
